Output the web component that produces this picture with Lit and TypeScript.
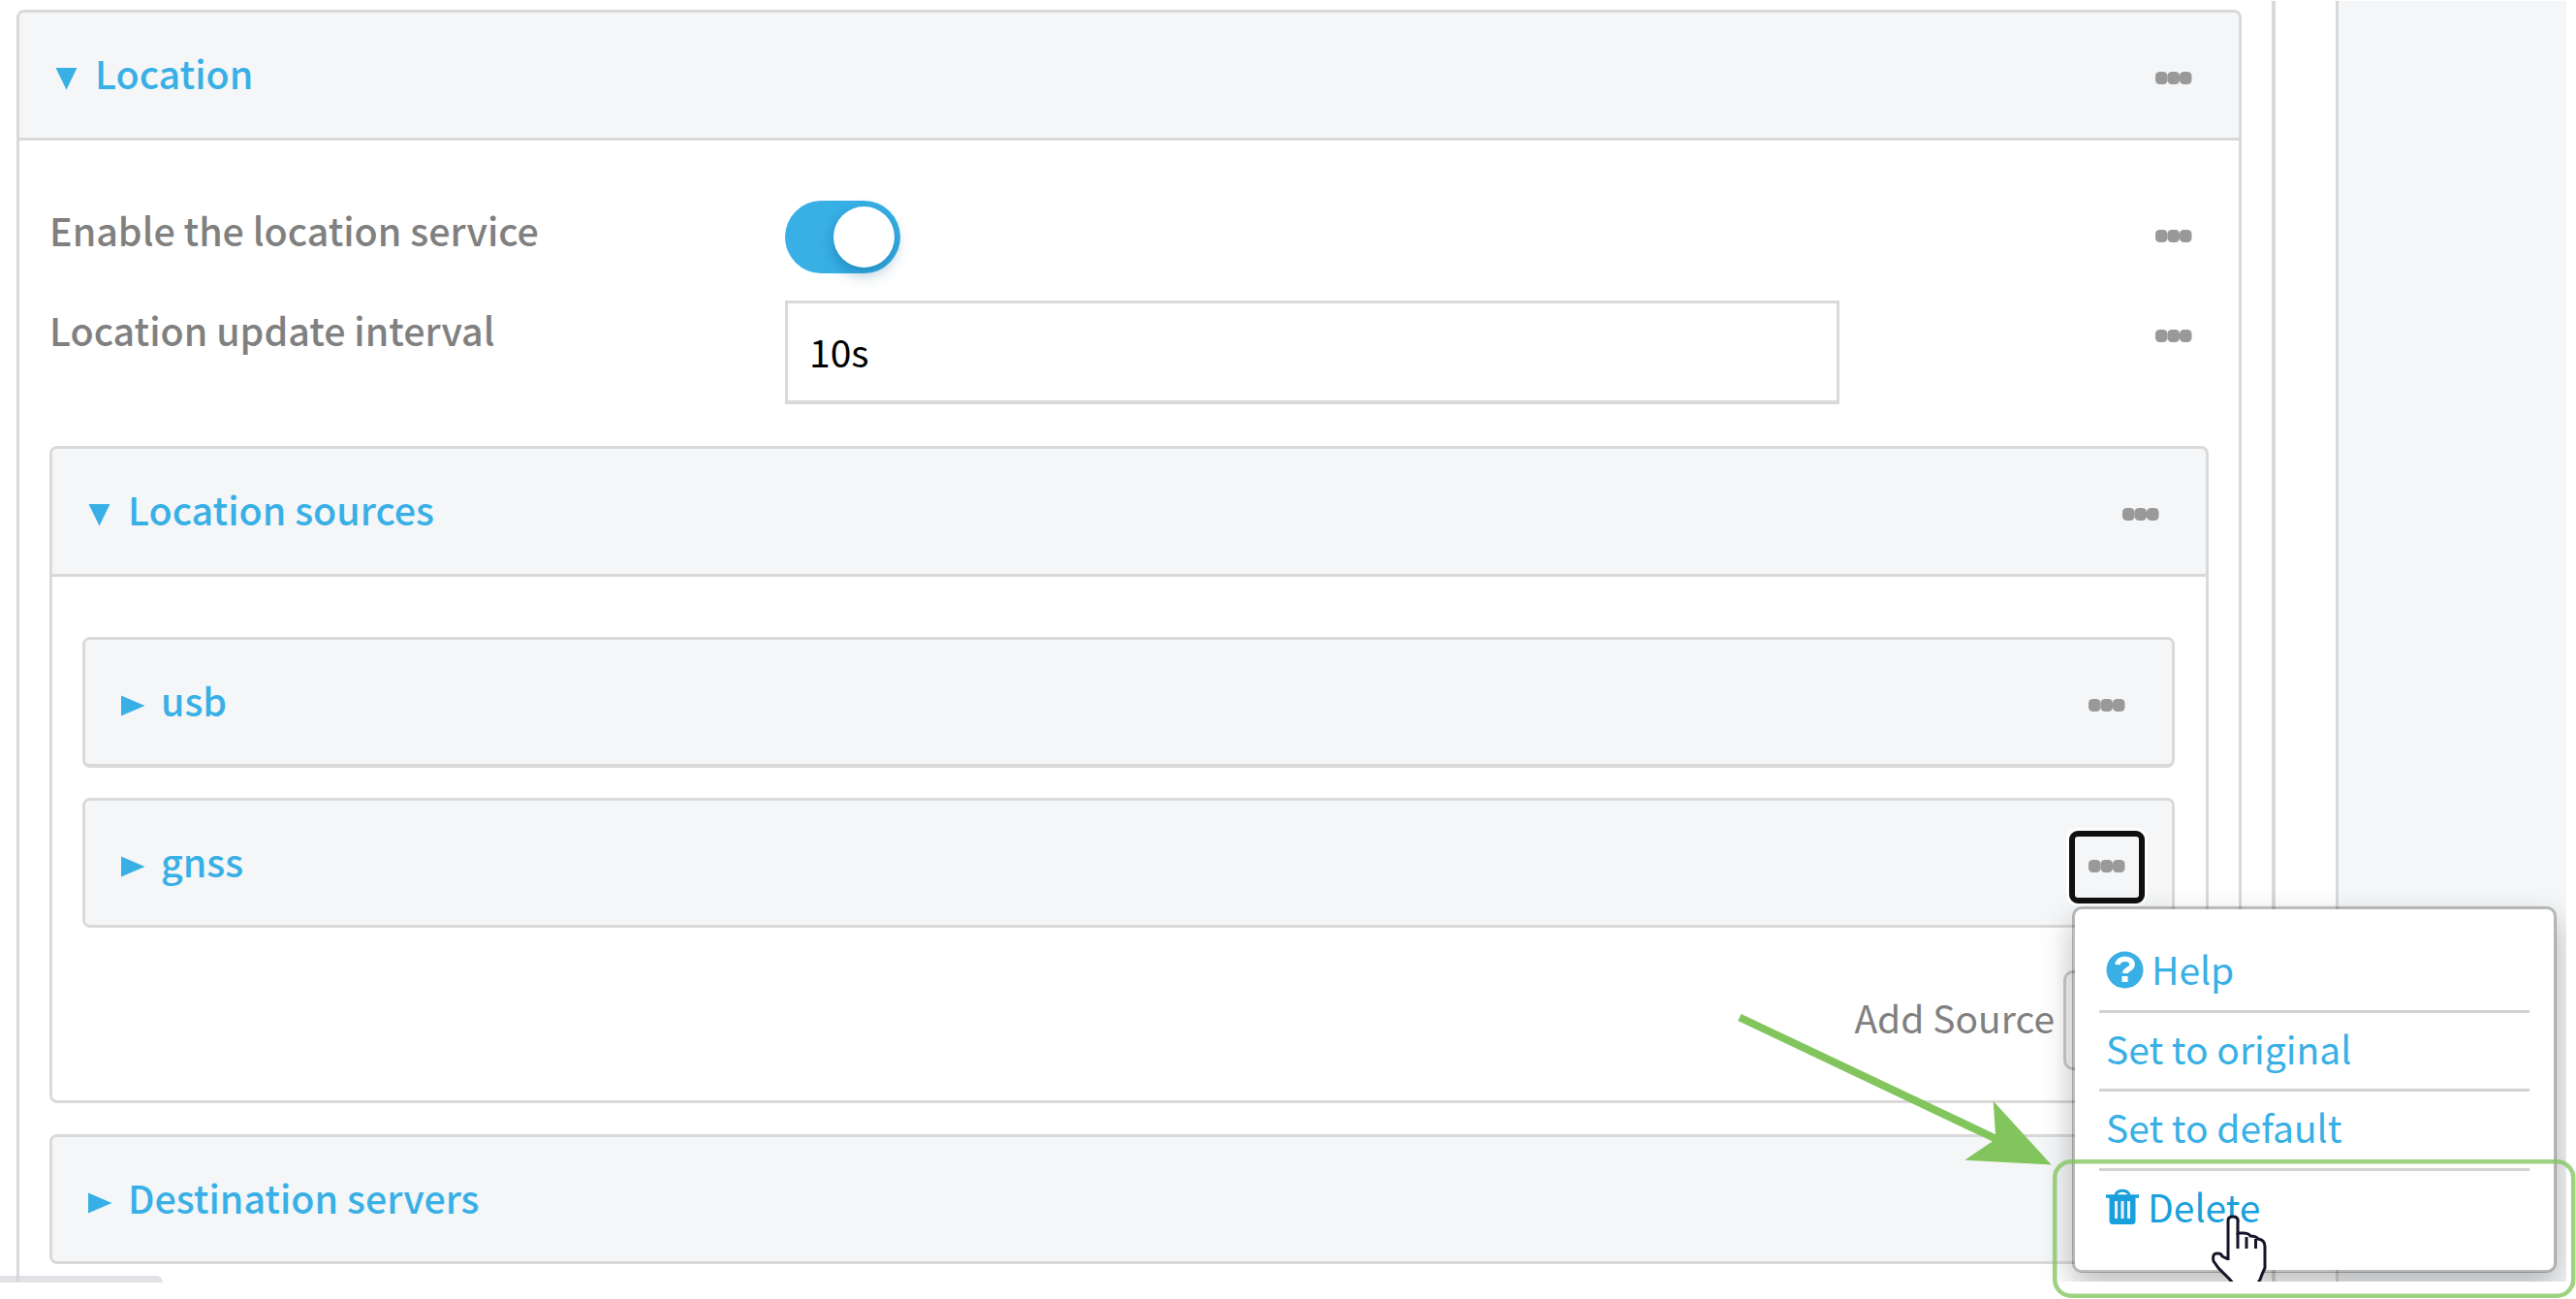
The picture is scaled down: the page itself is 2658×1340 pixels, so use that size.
import { LitElement, html, svg, css, nothing } from 'lit';
import { customElement, property } from 'lit/decorators.js';

const FONT = css`'Noto Sans CJK SC', 'Open Sans', sans-serif`;

@customElement('more-button')
class MoreButton extends LitElement {
  @property({ type: Boolean, reflect: true }) focused = false;

  static styles = css`
    :host {
      display: flex;
      align-items: center;
      justify-content: center;
      box-sizing: border-box;
      width: 78px;
      height: 75px;
      flex: none;
    }
    :host([focused]) {
      border: 6px solid #101010;
      border-radius: 9px;
      box-shadow: 0 0 0 3px #fff;
    }
    svg {
      display: block;
      flex: none;
      margin-bottom: 3px;
    }
  `;

  render() {
    return html`
      <svg width="38" height="15" viewBox="0 0 38 15" fill="#999">
        <rect x="0" y="1" width="12.500" height="13" rx="4.500" />
        <rect x="12.500" y="1" width="12.500" height="13" rx="4.500" />
        <rect x="25" y="1" width="12.500" height="13" rx="4.500" />
      </svg>
    `;
  }
}

// Collapsible section: header bar plus optional slotted body
@customElement('config-panel')
class ConfigPanel extends LitElement {
  @property() label = '';
  @property({ type: Boolean, reflect: true }) open = false;
  @property({ type: Boolean, reflect: true }) active = false;

  static styles = css`
    :host {
      display: block;
      box-sizing: border-box;
      border: 3px solid #d9d9d9;
      border-radius: 8px;
      background: #fff;
    }
    .header {
      display: flex;
      align-items: center;
      height: 128px;
      padding: 0 28px 0 35px;
      background: #f4f6f8;
      border-radius: 5px;
    }
    :host([open]) .header {
      height: 129px;
      border-bottom: 3px solid #d9d9d9;
      border-radius: 5px 5px 0 0;
    }
    .arrow {
      width: 28px;
      height: 24px;
      margin: 7px 15px 0 0;
    }
    .title {
      flex: 1;
      margin-bottom: 5px;
      font: 500 39.4px/58px ${FONT};
      color: #38b0e6;
    }
    more-button {
      margin-top: 9px;
    }
  `;

  render() {
    return html`
      <div class="header">
        <svg class="arrow" viewBox="0 0 28 24" fill="#38b0e6">
          ${this.open
            ? svg`<path d="M2.500 1h22L13.500 23.500z" />`
            : svg`<path d="M2 1.500v21L26.500 12z" />`}
        </svg>
        <div class="title">${this.label}</div>
        <more-button ?focused=${this.active}></more-button>
      </div>
      ${this.open ? html`<slot></slot>` : nothing}
    `;
  }
}

@customElement('app-root')
class AppRoot extends LitElement {
  static styles = css`
    :host {
      display: block;
      position: relative;
      width: 2658px;
      height: 1340px;
      overflow: hidden;
      background: #fff;
      font: 400 39px/58px ${FONT};
      color: #808080;
    }
    .page {
      position: relative;
      display: flex;
      box-sizing: border-box;
      width: 2648px;
      height: 1322px;
      padding-top: 1px;
      overflow: hidden;
    }
    .content {
      box-sizing: border-box;
      width: 2348px;
      padding: 9px 31px 0 17px;
      border-right: 4px solid #d9d9d9;
    }
    .aside {
      flex: 1;
      margin-left: 62px;
      border-left: 3px solid #d9d9d9;
      background: #f4f6f8;
    }
    .root {
      height: 1400px;
    }
    .body {
      padding: 62px 31px 0;
    }
    .field {
      display: grid;
      grid-template-columns: 759px 1088px 1fr;
      align-items: start;
      height: 103px;
    }
    .field.tall {
      height: 150px;
    }
    .field more-button {
      justify-self: end;
      margin-right: -3px;
    }
    .name {
      font-size: 39.4px;
      font-weight: 500;
      line-height: 60px;
    }
    .toggle {
      display: flex;
      justify-content: flex-end;
      align-items: center;
      box-sizing: border-box;
      width: 119px;
      height: 75px;
      padding: 6px;
      border-radius: 38px;
      background: #38b0e6;
    }
    .knob {
      width: 63px;
      height: 63px;
      border-radius: 50%;
      background: #fff;
      box-shadow: 0 6px 16px rgba(0, 80, 130, 0.4);
    }
    .input {
      box-sizing: border-box;
      height: 107px;
      padding: 0 22px;
      border: 3px solid #d9d9d9;
      border-bottom-width: 4px;
      line-height: 98px;
      color: #000;
    }
    .sources {
      height: 678px;
      margin-bottom: 32px;
    }
    .list {
      display: flex;
      flex-direction: column;
      gap: 31px;
      padding: 62px 32px 0 31px;
    }
    .list config-panel:first-child {
      border-bottom-width: 4px;
    }
    .add {
      display: flex;
      justify-content: flex-end;
      align-items: center;
      gap: 9px;
      padding: 44px 32px 0;
    }
    .add span {
      margin-bottom: 7px;
    }
    .select {
      box-sizing: border-box;
      width: 115px;
      height: 103px;
      border: 3px solid #ccc;
      border-radius: 10px;
      background: #fafafa;
    }
    .menu {
      position: absolute;
      left: 2138px;
      top: 935px;
      box-sizing: border-box;
      width: 500px;
      height: 378px;
      padding: 25px 25px 0;
      border: 3px solid rgba(0, 0, 0, 0.25);
      border-radius: 10px;
      background: #fff;
      background-clip: padding-box;
      box-shadow: 0 14px 32px rgba(0, 0, 0, 0.26);
      color: #38b0e6;
    }
    .item {
      display: flex;
      align-items: center;
      box-sizing: border-box;
      height: 81.5px;
      padding: 0 0 6px 7px;
      border-bottom: 3px solid #d2d2d2;
    }
    .item:last-child {
      border-bottom-color: transparent;
      color: #18a0dc;
    }
    .item svg {
      margin: 2px 8px 0 0;
      flex: none;
    }
    .status {
      position: absolute;
      left: 0;
      top: 1316px;
      width: 168px;
      height: 7px;
      border-top-right-radius: 7px;
      background: rgba(212, 214, 220, 0.7);
    }
    .cursor {
      position: absolute;
      left: 2280px;
      top: 1252px;
    }
    .notes {
      position: absolute;
      left: 0;
      top: 0;
    }
  `;

  render() {
    return html`
      <div class="page">
        <div class="content">
          <config-panel class="root" label="Location" open>
            <div class="body">
              <div class="field">
                <div class="name">Enable the location service</div>
                <div class="toggle"><div class="knob"></div></div>
                <more-button></more-button>
              </div>
              <div class="field tall">
                <div class="name">Location update interval</div>
                <div class="input">10s</div>
                <more-button></more-button>
              </div>
              <config-panel class="sources" label="Location sources" open>
                <div class="list">
                  <config-panel label="usb"></config-panel>
                  <config-panel label="gnss" active></config-panel>
                </div>
                <div class="add">
                  <span>Add Source</span>
                  <div class="select"></div>
                </div>
              </config-panel>
              <config-panel label="Destination servers"></config-panel>
            </div>
          </config-panel>
        </div>
        <div class="aside"></div>
        <div class="menu">
          <div class="item">
            <svg width="39" height="39" viewBox="0 0 39 39">
              <circle cx="19.500" cy="19.500" r="19" fill="#38b0e6" />
              <path d="M12 14c1-8 16-7 15 0c0 5-7 4.500-7.500 9" fill="none" stroke="#fff" stroke-width="5.500" />
              <rect x="16.500" y="26" width="6" height="6" fill="#fff" />
            </svg>
            Help
          </div>
          <div class="item">Set to original</div>
          <div class="item">Set to default</div>
          <div class="item">
            <svg width="35" height="38" viewBox="0 0 35 38" fill="none" stroke="#18a0dc">
              <path d="M10 7c1-6.500 13-6.500 14 0" stroke-width="3" />
              <path d="M0 8h34" stroke-width="3.500" />
              <path d="M5 9v24q0 2.500 2 2.500h20q2 0 2-2.500V9" fill="#18a0dc" stroke-width="3" />
              <path d="M10.500 13v18M17 13v18M23.500 13v18" stroke="#f0f0f6" stroke-width="3" />
            </svg>
            Delete
          </div>
        </div>
        <svg class="cursor" width="62" height="84" viewBox="0 0 62 84">
          <path
            d="M19 48V7q0-4 5-4t5 4V20h6q5 0 7 3q6 0 8 3q7 1 7 8V56q-3 6-5 12l-4 6H26L20 67L9 56L4 49q-2-9 5-8q3 0 4 3l6 3z"
            fill="#fff" stroke="#15152a" stroke-width="3" />
          <path d="M29 20v16M38 24v12M47.500 26v10" fill="none" stroke="#15152a" stroke-width="3" />
        </svg>
      </div>
      <div class="status"></div>
      <svg class="notes" width="2658" height="1340" viewBox="0 0 2658 1340">
        <rect x="2120.200" y="1198.200" width="535" height="138.500" rx="17" fill="none" stroke="#82c55d" stroke-opacity="0.780" stroke-width="4.500" />
        <path d="M1795 1049.500L2062 1176" stroke="#82c55d" stroke-width="8" />
        <path d="M2116.700 1201.500L2056.700 1135.700L2059 1170L2056 1177.300L2027.300 1196.700z" fill="#82c55d" />
      </svg>
    `;
  }
}
